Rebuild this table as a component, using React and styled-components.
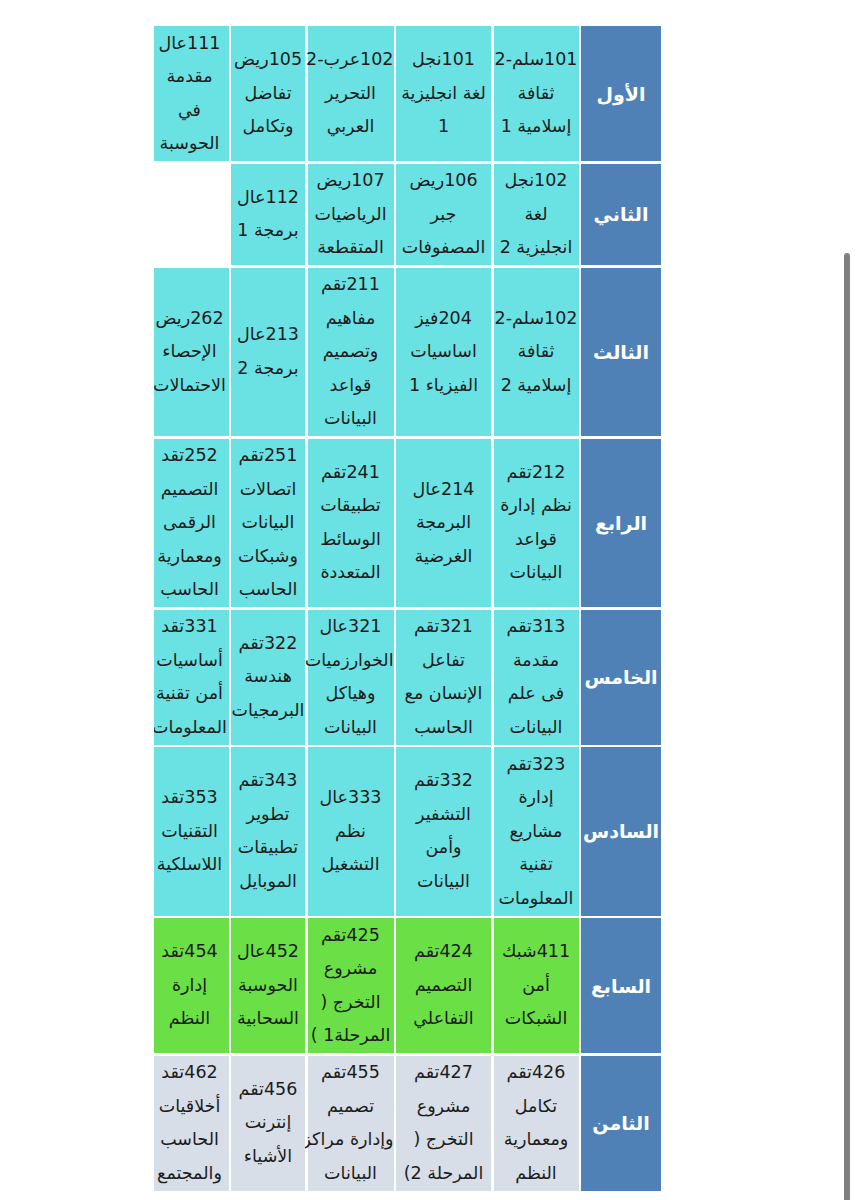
import React from "react";
import styled, { createGlobalStyle } from "styled-components";

const palette = {
	header: "#4f81b7",
	cyan: "#6ae2e3",
	green: "#6ae046",
	gray: "#d7dee8",
};

const levels = [
	{
		title: "الأول",
		tone: "cyan",
		courses: [
			["101سلم-2", "ثقافة", "إسلامية 1"],
			["101نجل", "لغة انجليزية", "1"],
			["102عرب-2", "التحرير", "العربي"],
			["105ريض", "تفاضل", "وتكامل"],
			["111عال", "مقدمة", "في", "الحوسبة"],
		],
	},
	{
		title: "الثاني",
		tone: "cyan",
		courses: [
			["102نجل", "لغة", "انجليزية 2"],
			["106ريض", "جبر", "المصفوفات"],
			["107ريض", "الرياضيات", "المتقطعة"],
			["112عال", "برمجة 1"],
			null,
		],
	},
	{
		title: "الثالث",
		tone: "cyan",
		courses: [
			["102سلم-2", "ثقافة", "إسلامية 2"],
			["204فيز", "اساسيات", "الفيزياء 1"],
			["211تقم", "مفاهيم", "وتصميم", "قواعد", "البيانات"],
			["213عال", "برمجة 2"],
			["262ريض", "الإحصاء", "الاحتمالات"],
		],
	},
	{
		title: "الرابع",
		tone: "cyan",
		courses: [
			["212تقم", "نظم إدارة", "قواعد", "البيانات"],
			["214عال", "البرمجة", "الغرضية"],
			["241تقم", "تطبيقات", "الوسائط", "المتعددة"],
			["251تقم", "اتصالات", "البيانات", "وشبكات", "الحاسب"],
			["252تقد", "التصميم", "الرقمى", "ومعمارية", "الحاسب"],
		],
	},
	{
		title: "الخامس",
		tone: "cyan",
		courses: [
			["313تقم", "مقدمة", "فى علم", "البيانات"],
			["321تقم", "تفاعل", "الإنسان مع", "الحاسب"],
			["321عال", "الخوارزميات", "وهياكل", "البيانات"],
			["322تقم", "هندسة", "البرمجيات"],
			["331تقد", "أساسيات", "أمن تقنية", "المعلومات"],
		],
	},
	{
		title: "السادس",
		tone: "cyan",
		courses: [
			["323تقم", "إدارة", "مشاريع", "تقنية", "المعلومات"],
			["332تقم", "التشفير", "وأمن", "البيانات"],
			["333عال", "نظم", "التشغيل"],
			["343تقم", "تطوير", "تطبيقات", "الموبايل"],
			["353تقد", "التقنيات", "اللاسلكية"],
		],
	},
	{
		title: "السابع",
		tone: "green",
		courses: [
			["411شبك", "أمن", "الشبكات"],
			["424تقم", "التصميم", "التفاعلي"],
			["425تقم", "مشروع", "التخرج (", "المرحلة1 )"],
			["452عال", "الحوسبة", "السحابية"],
			["454تقد", "إدارة", "النظم"],
		],
	},
	{
		title: "الثامن",
		tone: "gray",
		courses: [
			["426تقم", "تكامل", "ومعمارية", "النظم"],
			["427تقم", "مشروع", "التخرج (", "المرحلة 2)"],
			["455تقم", "تصميم", "وإدارة مراكز", "البيانات"],
			["456تقم", "إنترنت", "الأشياء"],
			["462تقد", "أخلاقيات", "الحاسب", "والمجتمع"],
		],
	},
];

export default function App() {
	return (
		<>
			<GlobalStyle />
			<Page>
				<TableViewport>
					<Plan>
						{levels.map((level) => (
							<React.Fragment key={level.title}>
								<LevelCell>{level.title}</LevelCell>
								{level.courses.map((course, i) =>
									course ? (
										<CourseCell key={i} $tone={level.tone}>
											{course.map((line, j) => (
												<Line key={j}>{line}</Line>
											))}
										</CourseCell>
									) : (
										<EmptyCell key={i} />
									)
								)}
							</React.Fragment>
						))}
					</Plan>
				</TableViewport>
			</Page>
			<ScrollThumb />
		</>
	);
}

const GlobalStyle = createGlobalStyle`
	body {
		margin: 0;
		background: #fff;
		font-family: "DejaVu Sans", "Noto Sans", sans-serif;
	}
`;

const Page = styled.div`
	padding: 26px 0 0 154px;
	min-height: 1200px;
	box-sizing: border-box;
`;

const TableViewport = styled.div`
	width: 507px;
	overflow: hidden;
	direction: rtl;
`;

const Plan = styled.div`
	display: grid;
	grid-template-columns: 80px 85px 95px 86px 74px 78px;
	gap: 2.5px;
	width: max-content;
`;

const LevelCell = styled.div`
	background: ${palette.header};
	color: #fff;
	font-weight: 700;
	font-size: 19px;
	display: flex;
	align-items: center;
	justify-content: center;
`;

const CourseCell = styled.div`
	background: ${(p) => palette[p.$tone]};
	color: #1c1c1c;
	font-size: 17.5px;
	line-height: 33.5px;
	padding: 0.5px 0;
	text-align: center;
	white-space: nowrap;
	display: flex;
	flex-direction: column;
	justify-content: center;
`;

const EmptyCell = styled.div`
	background: #fff;
`;

const Line = styled.span`
	display: block;
`;

const ScrollThumb = styled.div`
	position: fixed;
	top: 253px;
	bottom: 0;
	right: 7px;
	width: 6px;
	border-radius: 3px 3px 0 0;
	background: #7f7f7f;
`;
